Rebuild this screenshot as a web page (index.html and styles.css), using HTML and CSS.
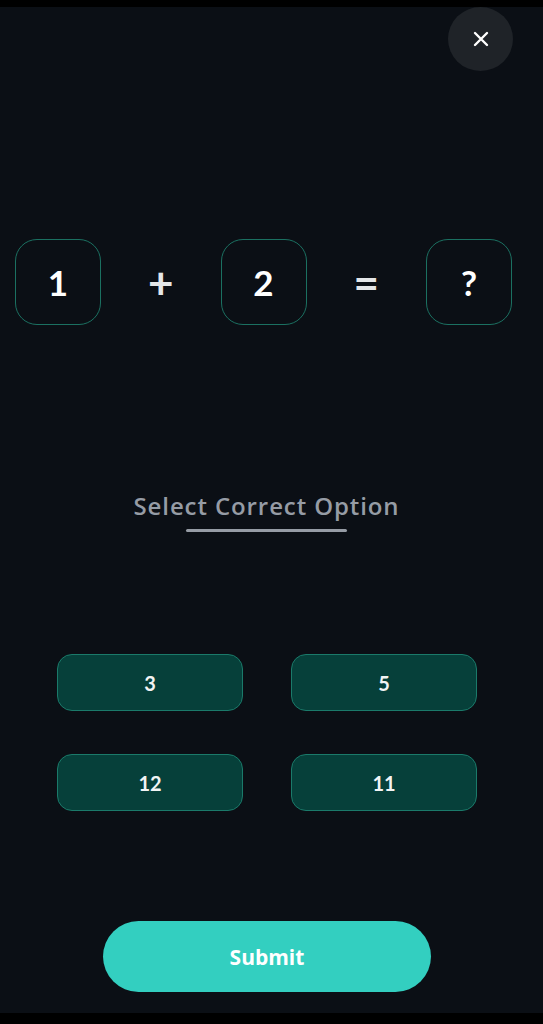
FILE: index.html
```html
<!DOCTYPE html>
<html lang="en">
<head>
    <meta charset="UTF-8">
    <meta name="viewport" content="width=device-width, initial-scale=1.0">
    <title>Quiz</title>
    <link rel="stylesheet" href="styles.css">
</head>
<body>
    <div class="screen">
        <div class="top-bar">
            <button class="close-button" aria-label="Close">
                <svg width="16" height="16" viewBox="0 0 16 16">
                    <path d="M2 2 L14 14 M14 2 L2 14" stroke="#fff" stroke-width="2.4" stroke-linecap="round"/>
                </svg>
            </button>
        </div>

        <div class="equation">
            <div class="number-box">1</div>
            <div class="operator">+</div>
            <div class="number-box">2</div>
            <div class="operator">=</div>
            <div class="number-box">?</div>
        </div>

        <div class="prompt">
            <h2>Select Correct Option</h2>
            <span class="prompt-line"></span>
        </div>

        <div class="options">
            <button class="option">3</button>
            <button class="option">5</button>
            <button class="option">12</button>
            <button class="option">11</button>
        </div>

        <button class="submit">Submit</button>
    </div>
</body>
</html>
```

FILE: styles.css
```css
body {
    margin: 0;
    padding: 7px 0 11px;
    height: 1024px;
    box-sizing: border-box;
    background: #000;
    font-family: 'Lato', 'Open Sans', sans-serif;
    overflow: hidden;
}

.screen {
    height: 100%;
    background: #0b0f15;
    display: flex;
    flex-direction: column;
    align-items: center;
}

.top-bar {
    align-self: stretch;
    display: flex;
    justify-content: flex-end;
    padding-right: 30px;
}

.close-button {
    width: 65px;
    height: 64px;
    border-radius: 50%;
    border: none;
    background: #1f2328;
    display: flex;
    align-items: center;
    justify-content: center;
    padding: 0;
    cursor: pointer;
}

.equation {
    align-self: stretch;
    display: flex;
    justify-content: space-between;
    align-items: center;
    margin: 168px 31px 0 15px;
}

.number-box {
    width: 84px;
    height: 84px;
    border: 1.5px solid #1b7061;
    border-radius: 22px;
    display: flex;
    align-items: center;
    justify-content: center;
    color: #fff;
    font-size: 35px;
    font-weight: 700;
}

.operator {
    width: 40px;
    text-align: center;
    color: #e4e6e8;
    font-size: 44px;
    font-weight: 700;
}

.prompt {
    display: flex;
    flex-direction: column;
    align-items: center;
    margin: 164px 0 0 -10px;
}

.prompt h2 {
    margin: 0;
    font-family: 'Open Sans', sans-serif;
    font-size: 24px;
    font-weight: 600;
    color: #969ca5;
    letter-spacing: 0.9px;
}

.prompt-line {
    width: 161px;
    height: 3px;
    border-radius: 2px;
    background: #969ca5;
    margin-top: 7px;
}

.options {
    display: grid;
    grid-template-columns: 186px 186px;
    column-gap: 48px;
    row-gap: 43px;
    margin: 122px 0 0 -9px;
}

.option {
    height: 57px;
    background: #06403a;
    border: 1.5px solid #1b7a6a;
    border-radius: 15px;
    color: #f2f4f4;
    font-family: 'Lato', sans-serif;
    font-size: 20px;
    font-weight: 700;
    cursor: pointer;
}

.submit {
    width: 328px;
    height: 71px;
    margin: 110px 0 0 -9px;
    border: none;
    border-radius: 36px;
    background: #33cfc0;
    color: #fff;
    font-family: 'Open Sans', sans-serif;
    font-size: 21px;
    font-weight: 700;
    cursor: pointer;
}
```
